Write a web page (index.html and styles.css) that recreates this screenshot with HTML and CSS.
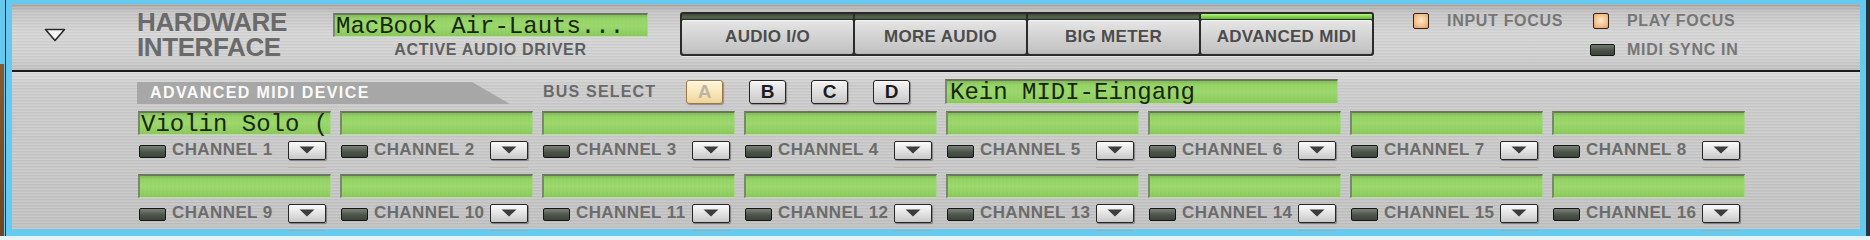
FILE: index.html
```html
<!DOCTYPE html>
<html lang="en">
<head>
    <meta charset="UTF-8">
    <title>Hardware Interface</title>
    <link rel="stylesheet" href="styles.css">
</head>
<body>
    <div class="rack">
        <!-- top strip -->
        <div class="panel top-panel">
            <div class="fold">
                <svg width="22" height="14" viewBox="0 0 22 14"><path d="M1.5 1.5 H20.5 L11 12.5 Z" fill="#f6f6f6" stroke="#2a2a2a" stroke-width="1.6" stroke-linejoin="round"/></svg>
            </div>
            <div class="title">
                <div class="title-line">HARDWARE</div>
                <div class="title-line">INTERFACE</div>
            </div>
            <div class="driver">
                <div class="lcd driver-lcd">MacBook Air-Lauts...</div>
                <div class="caption">ACTIVE AUDIO DRIVER</div>
            </div>
            <div class="tabs">
                <div class="tab"><span class="tab-light"></span><span class="tab-btn">AUDIO I/O</span></div>
                <div class="tab"><span class="tab-light"></span><span class="tab-btn">MORE AUDIO</span></div>
                <div class="tab"><span class="tab-light"></span><span class="tab-btn">BIG METER</span></div>
                <div class="tab active"><span class="tab-light"></span><span class="tab-btn">ADVANCED MIDI</span></div>
            </div>
            <div class="focus">
                <div class="focus-item"><span class="led orange"></span><span>INPUT FOCUS</span></div>
                <div class="focus-item"><span class="led orange play"></span><span>PLAY FOCUS</span></div>
                <div class="focus-item"></div>
                <div class="focus-item"><span class="led sync"></span><span>MIDI SYNC IN</span></div>
            </div>
        </div>

        <div class="divider"></div>

        <!-- advanced midi device -->
        <div class="panel bottom-panel">
            <div class="bus-row">
                <div class="device-head">ADVANCED MIDI DEVICE</div>
                <div class="bus-label">BUS SELECT</div>
                <div class="bus-btn on">A</div>
                <div class="bus-btn">B</div>
                <div class="bus-btn">C</div>
                <div class="bus-btn">D</div>
                <div class="lcd bus-lcd">Kein MIDI-Eingang</div>
            </div>

            <div class="channels" id="channels"></div>
        </div>
    </div>

    <script>
        // build the 16 channel slots
        const names = { 1: 'Violin Solo (Legato)' };
        const grid = document.getElementById('channels');
        const arrow = '<svg width="16" height="8" viewBox="0 0 16 8"><path d="M0.5 0.5 H15.5 L8 7.5 Z" fill="#3c3c3c"/></svg>';

        for (let i = 1; i <= 16; i++) {
            const ch = document.createElement('div');
            ch.className = 'channel';
            ch.innerHTML =
                '<div class="lcd ch-lcd">' + (names[i] || '') + '</div>' +
                '<div class="ch-ctrl">' +
                    '<span class="ch-led"></span>' +
                    '<span class="ch-name">CHANNEL ' + i + '</span>' +
                    '<span class="drop">' + arrow + '</span>' +
                '</div>' +
                '<div class="tick"></div>';
            grid.appendChild(ch);
        }
    </script>
</body>
</html>
```

FILE: styles.css
```css
* {
    margin: 0;
    padding: 0;
    box-sizing: border-box;
}

body {
    width: 1870px;
    height: 240px;
    overflow: hidden;
    background: #e6f3f8;
    font-family: 'Liberation Sans', Arial, sans-serif;
    font-weight: bold;
}

/* blue window frame */
.rack {
    height: 236px;
    padding: 4px 10px 7px 12px;
    background:
        linear-gradient(#8a5a2e, #6e4420) 0 64px / 4px 172px no-repeat,
        linear-gradient(to right, #66c9f0 0 5px, #1e2c34 5px 6px, #66c9f0 6px 1866px, #26363e 1866px);
}

.panel {
    background-color: #c9c9c9;
}

/* Top strip */
.top-panel {
    height: 66px;
    display: flex;
    align-items: flex-start;
    background-image:
        repeating-linear-gradient(180deg, rgba(255, 255, 255, 0.10) 0 1px, rgba(0, 0, 0, 0.035) 1px 2px, transparent 2px 3px),
        linear-gradient(#a6a6a6, #c6c6c6 12%, #d6d6d6 45%, #d0d0d0 80%, #c2c2c2);
}

.fold {
    margin: 24px 0 0 32px;
    width: 22px;
    height: 14px;
    display: flex;
}

.title {
    width: 150px;
    margin: 6px 0 0 71px;
    font-size: 26px;
    letter-spacing: -0.4px;
    color: #6a6a6a;
    white-space: nowrap;
}

.title-line {
    height: 25px;
    line-height: 25px;
}

.driver {
    width: 315px;
    margin: 9px 0 0 46px;
    text-align: center;
}

.caption {
    margin-top: 5px;
    font-size: 16px;
    line-height: 16px;
    letter-spacing: 0.7px;
    color: #5e5e5e;
}

/* LCD displays */
.lcd {
    height: 24px;
    padding-left: 1px;
    background:
        repeating-linear-gradient(90deg, rgba(255, 255, 255, 0.03) 0 2px, transparent 2px 4px),
        linear-gradient(#7fbd52, #93d263 18%, #9ad76b 50%, #8ecd5e 85%, #88c65a);
    border-top: 2px solid #6a7760;
    border-left: 2px solid #7a8870;
    border-bottom: 1px solid #b8dca0;
    border-right: 1px solid #acd294;
    font-family: 'Liberation Mono', 'DejaVu Sans Mono', monospace;
    font-weight: normal;
    font-size: 24px;
    line-height: 23px;
    color: #18260e;
    white-space: nowrap;
    overflow-x: clip;
    overflow-y: visible;
    text-align: left;
}

/* Tab buttons */
.tabs {
    width: 694px;
    height: 44px;
    margin: 8px 0 0 32px;
    padding: 2px;
    display: flex;
    gap: 2px;
    background: #2b2b2b;
    border-radius: 3px;
    box-shadow: 0 1px 0 rgba(255, 255, 255, 0.5);
}

.tab {
    flex: 1;
    display: flex;
    flex-direction: column;
}

.tab-light {
    height: 5px;
    border-radius: 1px 1px 0 0;
    background: linear-gradient(#3a4634, #57654f 60%, #4c5846);
}

.tab.active .tab-light {
    background: linear-gradient(#b8f884, #84d84c 50%, #62b232);
}

.tab-btn {
    flex: 1;
    margin-top: 1px;
    display: flex;
    align-items: center;
    justify-content: center;
    border-radius: 2px;
    background: linear-gradient(#e6e6e6, #d6d6d6 40%, #c6c6c6 85%, #b8b8b8);
    box-shadow: inset 0 1px 0 #f6f6f6;
    font-size: 17px;
    letter-spacing: 0.3px;
    color: #4c4c4c;
}

/* Focus lights */
.focus {
    margin: 9px 0 0 39px;
    display: grid;
    grid-template-columns: 177px auto;
    grid-template-rows: 16px 14px;
    row-gap: 14px;
}

.focus-item {
    display: flex;
    align-items: center;
    font-size: 16px;
    letter-spacing: 0.7px;
    color: #767676;
}

.led {
    flex: none;
    border-radius: 2px;
    margin-right: 18px;
}

.led.orange {
    width: 16px;
    height: 16px;
    border: 1.5px solid #2e2418;
    background: radial-gradient(circle at 50% 45%, #fde8c8, #f3bf8c 60%, #dc9c68);
}

.led.play {
    margin-left: 3px;
}

.led.sync {
    width: 25px;
    height: 12px;
    margin-right: 12px;
    border: 1.5px solid #181818;
    background: linear-gradient(#717a6e, #4a5248 55%, #3c433c);
}

.divider {
    height: 2px;
    background: #1c1c1c;
}

/* Advanced MIDI device */
.bottom-panel {
    height: 157px;
    padding: 7px 0 0 126px;
    background-image:
        repeating-linear-gradient(180deg, rgba(255, 255, 255, 0.10) 0 1px, rgba(0, 0, 0, 0.035) 1px 2px, transparent 2px 3px),
        linear-gradient(#dedede, #cdcdcd 8%, #c8c8c8 60%, #c2c2c2);
}

.bus-row {
    height: 25px;
    display: flex;
    align-items: flex-end;
}

.device-head {
    width: 373px;
    height: 22px;
    margin-left: -1px;
    padding-left: 13px;
    background: #a7a7a7;
    clip-path: polygon(0 0, 335px 0, 100% 100%, 0 100%);
    font-size: 16px;
    line-height: 22px;
    letter-spacing: 1.4px;
    color: #fafafa;
}

.bus-label {
    width: 143px;
    margin-left: 33px;
    align-self: center;
    font-size: 16px;
    letter-spacing: 1.2px;
    color: #6a6a6a;
}

.bus-btn {
    width: 37px;
    height: 24px;
    margin-right: 25px;
    display: flex;
    align-items: center;
    justify-content: center;
    border: 1.5px solid #232323;
    border-radius: 3px;
    background: linear-gradient(#f4f4f4, #dcdcdc 55%, #c8c8c8);
    box-shadow: 1px 1px 1px rgba(0, 0, 0, 0.3), inset 0 1px 0 #ffffff;
    font-size: 19px;
    color: #1c1c1c;
}

.bus-btn.on {
    border-color: #9c7646;
    background: linear-gradient(#fff6dc, #f8e6b8 55%, #efd49c);
    color: #bdb4a2;
}

.bus-btn:nth-of-type(3) {
    margin-right: 26px;
}

.bus-lcd {
    width: 393px;
    height: 25px;
    margin-left: 10px;
    padding-left: 3px;
}

/* Channel grid */
.channels {
    margin-top: 7px;
    display: grid;
    grid-template-columns: repeat(8, 193px);
    column-gap: 9px;
    row-gap: 6px;
}

.ch-lcd {
    height: 24px;
}

.ch-ctrl {
    height: 20px;
    margin-top: 5px;
    display: flex;
    align-items: center;
}

.ch-led {
    width: 27px;
    height: 13px;
    margin: 2px 0 0 1px;
    border: 1.5px solid #161616;
    border-radius: 2px;
    background: linear-gradient(#7b8379, #4c544a 55%, #3d443d);
}

.ch-name {
    margin-left: 6px;
    font-size: 17px;
    letter-spacing: 0.4px;
    color: #6c6c6c;
    white-space: nowrap;
}

.drop {
    width: 38px;
    height: 19px;
    margin: 0 5px 0 auto;
    display: flex;
    align-items: center;
    justify-content: center;
    border: 1px solid #262626;
    border-radius: 2px;
    background: linear-gradient(#fbfbfb, #e0e0e0 55%, #c8c8c8);
    box-shadow: 1px 1px 1px rgba(0, 0, 0, 0.35);
}

.tick {
    width: 38px;
    height: 1px;
    margin: 7px 5px 0 auto;
    background: rgba(190, 150, 100, 0.35);
}
```
